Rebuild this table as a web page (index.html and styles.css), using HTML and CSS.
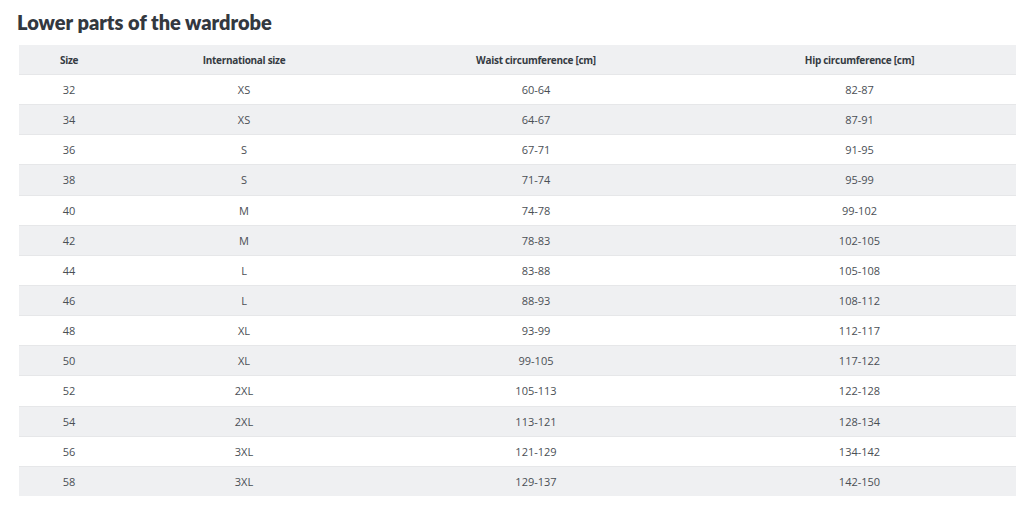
FILE: index.html
```html
<!DOCTYPE html>
<html lang="en">
<head>
<meta charset="utf-8">
<title>Lower parts of the wardrobe</title>
<link rel="stylesheet" href="styles.css">
</head>
<body>
<main class="page">
  <h2 class="title">Lower parts of the wardrobe</h2>
  <table class="sizes">
    <colgroup>
      <col class="c1"><col class="c2"><col class="c3"><col class="c4">
    </colgroup>
    <thead>
      <tr><th>Size</th><th>International size</th><th>Waist circumference [cm]</th><th>Hip circumference [cm]</th></tr>
    </thead>
    <tbody>
      <tr><td>32</td><td>XS</td><td>60-64</td><td>82-87</td></tr>
      <tr><td>34</td><td>XS</td><td>64-67</td><td>87-91</td></tr>
      <tr><td>36</td><td>S</td><td>67-71</td><td>91-95</td></tr>
      <tr><td>38</td><td>S</td><td>71-74</td><td>95-99</td></tr>
      <tr><td>40</td><td>M</td><td>74-78</td><td>99-102</td></tr>
      <tr><td>42</td><td>M</td><td>78-83</td><td>102-105</td></tr>
      <tr><td>44</td><td>L</td><td>83-88</td><td>105-108</td></tr>
      <tr><td>46</td><td>L</td><td>88-93</td><td>108-112</td></tr>
      <tr><td>48</td><td>XL</td><td>93-99</td><td>112-117</td></tr>
      <tr><td>50</td><td>XL</td><td>99-105</td><td>117-122</td></tr>
      <tr><td>52</td><td>2XL</td><td>105-113</td><td>122-128</td></tr>
      <tr><td>54</td><td>2XL</td><td>113-121</td><td>128-134</td></tr>
      <tr><td>56</td><td>3XL</td><td>121-129</td><td>134-142</td></tr>
      <tr><td>58</td><td>3XL</td><td>129-137</td><td>142-150</td></tr>
    </tbody>
  </table>
</main>
</body>
</html>
```

FILE: styles.css
```css
html, body {
  margin: 0;
  padding: 0;
  background: #ffffff;
}

.page {
  padding: 9px 8px 0 17px;
  font-family: "Open Sans", "Liberation Sans", sans-serif;
  color: #353b42;
}

.title {
  margin: 0 0 10px 0;
  font-family: "Lato", "Open Sans", sans-serif;
  font-weight: 800;
  font-size: 20px;
  line-height: 26px;
  color: #33383f;
}

.sizes {
  margin-left: 2px;
  width: 997px;
  border-collapse: collapse;
  table-layout: fixed;
  font-size: 11px;
}

.c1 { width: 100px; }
.c2 { width: 250px; }
.c3 { width: 334px; }
.c4 { width: 313px; }

.sizes th,
.sizes td {
  height: 29.15px;
  padding: 0;
  text-align: center;
  vertical-align: middle;
  border-bottom: 1px solid #e6e7e9;
}

.sizes th {
  height: 29px;
  font-weight: 700;
  font-size: 10px;
  letter-spacing: -0.3px;
  background: #eff0f2;
  color: #353b42;
}

.sizes td {
  color: #4a4f55;
}

.sizes tbody tr:nth-child(even) td {
  background: #eff0f2;
}

.sizes tbody tr:last-child td {
  border-bottom: none;
}
```
